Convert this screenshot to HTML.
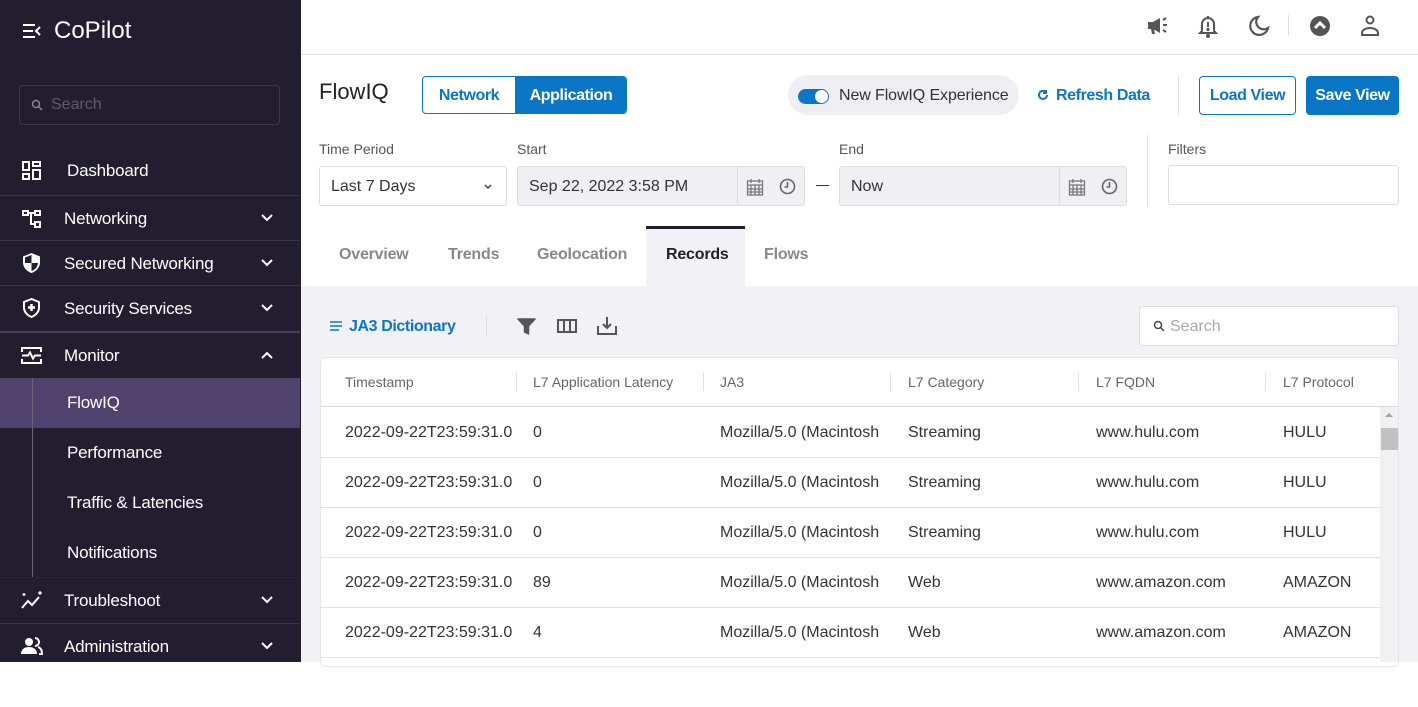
<!DOCTYPE html><html><head><meta charset="utf-8"><style>
*{box-sizing:border-box;margin:0;padding:0}
body{width:1418px;height:662px;overflow:hidden;font-family:"Liberation Sans",sans-serif;position:relative;background:#fff}
.a{position:absolute}
#sb{left:0;top:0;width:301px;height:662px;background:#221e2f;color:#fff}
.it{position:absolute;left:0;width:300px;font-size:17px;height:45px;line-height:45px;letter-spacing:-0.2px}
.it .t{position:absolute;left:64px}
.sep{position:absolute;left:0;width:300px;height:1px;background:#3a3448}
.chev{position:absolute;left:260px;top:15px}
.sub{position:absolute;left:0;width:300px;height:50px;line-height:50px;font-size:17px;letter-spacing:-0.2px}
.sub span{position:absolute;left:67px}
.lbl{font-size:14px;color:#555;top:141px}
.inp{border:1px solid #ddd;border-radius:3px;height:40px;top:166px;font-size:16px;line-height:38px;color:#333;padding-left:11px}
.tab{top:245px;font-size:16px;color:#888;font-weight:bold;letter-spacing:-0.2px}
.th{top:374px;font-size:14px;color:#666}
.vd{position:absolute;top:373px;width:1px;height:18px;background:#e2e2e2}
.row{position:absolute;left:320px;width:1060px;height:50px;border-top:1px solid #e3e3e3;font-size:16px;color:#333;line-height:50px}
.row span{position:absolute}
.bb{letter-spacing:-0.4px;font-size:16px;font-weight:bold}
</style></head><body>
<div id="sb" class="a">
<svg class="a" style="left:22px;top:23px" width="20" height="16" viewBox="0 0 20 16"><path d="M1 2h12M1 8h10M1 14h12M18 4l-4 4 4 4" stroke="#fff" stroke-width="2" fill="none"/></svg>
<div class="a" style="left:54px;top:17px;font-size:24px">CoPilot</div>
<div class="a" style="left:19px;top:85px;width:261px;height:40px;border:1px solid #3d374d;border-radius:4px"></div>
<svg class="a" style="left:31px;top:99px" width="12" height="12" viewBox="0 0 12 12"><circle cx="5" cy="5" r="3.5" stroke="#888" stroke-width="1.5" fill="none"/><path d="M7.5 7.5l3.5 3.5" stroke="#888" stroke-width="1.5"/></svg>
<div class="a" style="left:51px;top:96px;font-size:16px;color:#5f5a6e">Search</div>
<div class="it" style="top:148px"><svg class="a" style="left:22px;top:13px" width="19" height="19" viewBox="0 0 19 19" fill="none" stroke="#fff" stroke-width="2"><rect x="1" y="1" width="6" height="8"/><rect x="11" y="1" width="7" height="4"/><rect x="1" y="13" width="6" height="5"/><rect x="11" y="9" width="7" height="9"/></svg><span class="t" style="left:67px">Dashboard</span></div>
<div class="sep" style="top:195px"></div>
<div class="it" style="top:196px"><svg class="a" style="left:22px;top:14px" width="20" height="18" viewBox="0 0 20 18" fill="none" stroke="#fff" stroke-width="2"><rect x="1" y="1" width="5" height="4"/><rect x="13" y="1" width="5" height="4"/><rect x="13" y="12" width="5" height="5"/><path d="M6 3h7M9 3v11h4"/></svg><span class="t">Networking</span><svg class="chev" width="14" height="14"><path d="M2 4l5 5 5-5" stroke="#fff" stroke-width="2" fill="none"/></svg></div>
<div class="sep" style="top:240px"></div>
<div class="it" style="top:241px"><svg class="a" style="left:22px;top:11px" width="19" height="22" viewBox="0 0 19 22"><path d="M9.5 1L1 4.5v6c0 5 4 9 8.5 10.5 4.5-1.5 8.5-5.5 8.5-10.5v-6z" fill="#fff"/><path d="M9.5 3v8H3v-5.5zM9.5 11H16c-.5 4-3 7-6.5 8z" fill="#221e2f"/></svg><span class="t">Secured Networking</span><svg class="chev" width="14" height="14"><path d="M2 4l5 5 5-5" stroke="#fff" stroke-width="2" fill="none"/></svg></div>
<div class="sep" style="top:285px"></div>
<div class="it" style="top:286px"><svg class="a" style="left:22px;top:11px" width="19" height="22" viewBox="0 0 19 22"><path d="M9.5 2L2 5v5.5c0 4.5 3.5 8 7.5 9.5 4-1.5 7.5-5 7.5-9.5V5z" fill="none" stroke="#fff" stroke-width="2"/><path d="M9.5 7v7M6 10.5h7" stroke="#fff" stroke-width="2.5"/></svg><span class="t">Security Services</span><svg class="chev" width="14" height="14"><path d="M2 4l5 5 5-5" stroke="#fff" stroke-width="2" fill="none"/></svg></div>
<div class="a" style="left:0;top:331px;width:300px;height:2px;background:#463e5c"></div>
<div class="it" style="top:333px"><svg class="a" style="left:21px;top:13px" width="21" height="19" viewBox="0 0 21 19" fill="none" stroke="#fff" stroke-width="2"><path d="M1 6V2h19v4M1 13v4h19v-4M1 9.5h6l2-3 3 6 2-3h6"/></svg><span class="t">Monitor</span><svg class="chev" width="14" height="14"><path d="M2 10l5-5 5 5" stroke="#fff" stroke-width="2" fill="none"/></svg></div>
<div class="a" style="left:0;top:378px;width:300px;height:50px;background:#4f436d"></div>
<div class="a" style="left:32px;top:378px;width:1px;height:200px;background:#6b6478"></div>
<div class="sub" style="top:378px"><span>FlowIQ</span></div>
<div class="sub" style="top:428px"><span>Performance</span></div>
<div class="sub" style="top:478px"><span>Traffic &amp; Latencies</span></div>
<div class="sub" style="top:528px"><span>Notifications</span></div>
<div class="sep" style="top:577px;background:#2a2538"></div>
<div class="it" style="top:578px"><svg class="a" style="left:20px;top:12px" width="24" height="20" viewBox="0 0 24 20" fill="none" stroke="#fff" stroke-width="2"><path d="M2 18l6-7 4 4 7-8"/><path d="M4 3v3M2.5 4.5h3M20 1v4M18 3h4" stroke-width="1.3"/></svg><span class="t">Troubleshoot</span><svg class="chev" width="14" height="14"><path d="M2 4l5 5 5-5" stroke="#fff" stroke-width="2" fill="none"/></svg></div>
<div class="sep" style="top:623px"></div>
<div class="it" style="top:624px"><svg class="a" style="left:21px;top:13px" width="22" height="18" viewBox="0 0 22 18" fill="#fff"><circle cx="8" cy="5" r="4"/><path d="M0 17c0-5 4-7 8-7s8 2 8 7z"/><path d="M14 1a4 4 0 010 8M17 10c3 1 4 3 4 7h-3" stroke="#fff" stroke-width="2" fill="none"/></svg><span class="t">Administration</span><svg class="chev" width="14" height="14"><path d="M2 4l5 5 5-5" stroke="#fff" stroke-width="2" fill="none"/></svg></div>
</div>

<div class="a" style="left:301px;top:54px;width:1117px;height:1px;background:#e2e2e2"></div>
<svg class="a" style="left:1146px;top:16px" width="24" height="20" viewBox="0 0 24 20" fill="#555"><path d="M2 6h5l7-4v15l-7-4H2z"/><path d="M5 13l1 5h3l-1-5z"/><path d="M17 9h4M17 4l3-2M17 14l3 2" stroke="#555" stroke-width="2"/></svg>
<svg class="a" style="left:1198px;top:14px" width="20" height="24" viewBox="0 0 20 24" fill="none" stroke="#555" stroke-width="2"><path d="M10 2v2M4 17V10a6 6 0 0112 0v7l2 2H2z"/><path d="M10 8v5" /><circle cx="10" cy="22" r="1" fill="#555"/><circle cx="10" cy="15.5" r=".6" fill="#555"/></svg>
<svg class="a" style="left:1248px;top:15px" width="22" height="22" viewBox="0 0 22 22"><path d="M10 2a9 9 0 1010 11A7.5 7.5 0 0110 2z" fill="none" stroke="#555" stroke-width="2.2"/></svg>
<div class="a" style="left:1288px;top:15px;width:1px;height:20px;background:#ddd"></div>
<svg class="a" style="left:1310px;top:16px" width="20" height="20" viewBox="0 0 20 20"><circle cx="10" cy="10" r="10" fill="#555"/><path d="M5 12l5-5 5 5" stroke="#fff" stroke-width="3" fill="none"/></svg>
<svg class="a" style="left:1360px;top:15px" width="20" height="22" viewBox="0 0 20 22" fill="none" stroke="#555" stroke-width="2"><circle cx="10" cy="5" r="3.5"/><path d="M2 20v-2c0-3 4-5 8-5s8 2 8 5v2z"/></svg>

<div class="a" style="left:319px;top:79px;font-size:22px;color:#222">FlowIQ</div>
<div class="a" style="left:422px;top:76px;width:205px;height:38px;border:1px solid #0b76c5;border-radius:4px;overflow:hidden">
<div class="a bb" style="left:0;top:0;width:92px;height:36px;line-height:37px;text-align:center;color:#0b76c5">Network</div>
<div class="a bb" style="left:92px;top:0;width:112px;height:36px;line-height:37px;text-align:center;background:#0b76c5;color:#fff">Application</div></div>
<div class="a" style="left:788px;top:75px;width:231px;height:40px;border-radius:20px;background:#efeef3"></div>
<div class="a" style="left:798px;top:89px;width:31px;height:15px;border-radius:8px;background:#0b76c5"></div>
<div class="a" style="left:815px;top:90px;width:13px;height:13px;border-radius:50%;background:#fff"></div>
<div class="a" style="left:839px;top:87px;font-size:16px;color:#333;letter-spacing:-0.1px">New FlowIQ Experience</div>
<svg class="a" style="left:1037px;top:89px" width="12" height="12" viewBox="0 0 12 12" fill="none" stroke="#0b76c5" stroke-width="2"><path d="M10 6a4 4 0 11-1.5-3.2"/><path d="M9 1v3H6" /></svg>
<div class="a bb" style="left:1056px;top:87px;color:#0b76c5">Refresh Data</div>
<div class="a" style="left:1178px;top:75px;width:1px;height:40px;background:#e2e2e2"></div>
<div class="a bb" style="left:1199px;top:76px;width:97px;height:39px;border:1px solid #0b76c5;border-radius:4px;line-height:37px;text-align:center;color:#0b76c5">Load View</div>
<div class="a bb" style="left:1306px;top:76px;width:93px;height:39px;background:#0b76c5;border-radius:4px;line-height:39px;text-align:center;color:#fff">Save View</div>

<div class="a lbl" style="left:319px">Time Period</div>
<div class="a lbl" style="left:517px">Start</div>
<div class="a lbl" style="left:839px">End</div>
<div class="a lbl" style="left:1168px">Filters</div>
<div class="a inp" style="left:319px;width:188px;line-height:40px">Last 7 Days<svg class="a" style="left:163px;top:16px" width="10" height="8"><path d="M2 2l3 3 3-3" stroke="#444" stroke-width="1.5" fill="none"/></svg></div>
<div class="a inp" style="left:517px;width:288px;background:#f0f0f4;line-height:40px">Sep 22, 2022 3:58 PM<div class="a" style="left:219px;top:0;width:1px;height:38px;background:#ddd"></div>
<svg class="a" style="left:228px;top:11px" width="18" height="18" viewBox="0 0 18 18" fill="none" stroke="#777" stroke-width="1.3"><rect x="1.5" y="3" width="15" height="14"/><path d="M1.5 7h15M1.5 11h15M1.5 14h15M5 7v10M9 7v10M13 7v10M5 1v4M13 1v4"/></svg>
<svg class="a" style="left:261px;top:11px" width="17" height="17" viewBox="0 0 17 17" fill="none" stroke="#666" stroke-width="1.6"><circle cx="8.5" cy="8.5" r="7"/><path d="M8.5 4v5H5.5"/></svg></div>
<div class="a" style="left:816px;top:185px;width:13px;height:1px;background:#333"></div>
<div class="a inp" style="left:839px;width:288px;background:#f0f0f4;line-height:40px">Now<div class="a" style="left:219px;top:0;width:1px;height:38px;background:#ddd"></div>
<svg class="a" style="left:228px;top:11px" width="18" height="18" viewBox="0 0 18 18" fill="none" stroke="#777" stroke-width="1.3"><rect x="1.5" y="3" width="15" height="14"/><path d="M1.5 7h15M1.5 11h15M1.5 14h15M5 7v10M9 7v10M13 7v10M5 1v4M13 1v4"/></svg>
<svg class="a" style="left:261px;top:11px" width="17" height="17" viewBox="0 0 17 17" fill="none" stroke="#666" stroke-width="1.6"><circle cx="8.5" cy="8.5" r="7"/><path d="M8.5 4v5H5.5"/></svg></div>
<div class="a" style="left:1147px;top:135px;width:1px;height:71px;background:#e2e2e2"></div>
<div class="a inp" style="left:1168px;top:165px;width:231px"></div>

<div class="a" style="left:646px;top:226px;width:99px;height:60px;background:#f2f2f6;border-top:3px solid #221e2f"></div>
<div class="a tab" style="left:339px;top:246px">Overview</div>
<div class="a tab" style="left:448px;top:246px">Trends</div>
<div class="a tab" style="left:537px;top:246px">Geolocation</div>
<div class="a tab" style="left:666px;top:246px;color:#222">Records</div>
<div class="a tab" style="left:764px;top:246px">Flows</div>

<div class="a" style="left:301px;top:286px;width:1117px;height:376px;background:#f2f2f6"></div>
<svg class="a" style="left:330px;top:321px" width="12" height="10"><path d="M0 1h12M0 5h12M0 9h9" stroke="#0b76c5" stroke-width="1.5"/></svg>
<div class="a bb" style="left:349px;top:318px;color:#0b76c5">JA3 Dictionary</div>
<div class="a" style="left:486px;top:316px;width:1px;height:20px;background:#ddd"></div>
<svg class="a" style="left:517px;top:318px" width="19" height="17" viewBox="0 0 19 17"><path d="M1 1h17l-6.5 7v8l-4-2V8z" fill="#555" stroke="#555" stroke-width="1.5" stroke-linejoin="round"/></svg>
<svg class="a" style="left:557px;top:319px" width="20" height="14" viewBox="0 0 20 14" fill="none" stroke="#555" stroke-width="2"><rect x="1" y="1" width="18" height="12"/><path d="M7 1v12M13 1v12"/></svg>
<svg class="a" style="left:597px;top:316px" width="20" height="19" viewBox="0 0 20 19" fill="none" stroke="#555" stroke-width="2"><path d="M1 10v8h18v-8M10 1v11M6 8l4 4 4-4"/></svg>
<div class="a" style="left:1139px;top:306px;width:260px;height:40px;background:#fff;border:1px solid #ddd;border-radius:4px"></div>
<svg class="a" style="left:1153px;top:320px" width="12" height="12" viewBox="0 0 12 12"><circle cx="5" cy="5" r="3.5" stroke="#444" stroke-width="1.5" fill="none"/><path d="M7.5 7.5l3.5 3.5" stroke="#444" stroke-width="1.5"/></svg>
<div class="a" style="left:1170px;top:318px;font-size:16px;color:#aaa">Search</div>

<div class="a" style="left:320px;top:357px;width:1079px;height:310px;background:#fff;border:1px solid #e5e5ea;border-radius:5px"></div>
<div class="a th" style="left:345px">Timestamp</div>
<div class="vd" style="left:516px"></div><div class="a th" style="left:533px">L7 Application Latency</div>
<div class="vd" style="left:703px"></div><div class="a th" style="left:720px">JA3</div>
<div class="vd" style="left:890px"></div><div class="a th" style="left:908px">L7 Category</div>
<div class="vd" style="left:1078px"></div><div class="a th" style="left:1096px">L7 FQDN</div>
<div class="vd" style="left:1265px"></div><div class="a th" style="left:1283px">L7 Protocol</div>
<div class="a" style="left:321px;top:406px;width:1077px;height:1px;background:#d8d8dc"></div>
<div class="a" style="left:1380px;top:407px;width:18px;height:255px;background:#f1f1f1"></div>
<svg class="a" style="left:1383px;top:411px" width="12" height="8"><path d="M2 6l4-4 4 4z" fill="#a3a3a3"/></svg>
<div class="a" style="left:1381px;top:428px;width:17px;height:22px;background:#c1c1c1"></div>

<div class="row" style="top:407px;border-top:none;line-height:52px"><span style="left:25px">2022-09-22T23:59:31.0</span><span style="left:213px">0</span><span style="left:400px">Mozilla/5.0 (Macintosh</span><span style="left:588px">Streaming</span><span style="left:776px">www.hulu.com</span><span style="left:963px">HULU</span></div>
<div class="row" style="top:457px"><span style="left:25px">2022-09-22T23:59:31.0</span><span style="left:213px">0</span><span style="left:400px">Mozilla/5.0 (Macintosh</span><span style="left:588px">Streaming</span><span style="left:776px">www.hulu.com</span><span style="left:963px">HULU</span></div>
<div class="row" style="top:507px"><span style="left:25px">2022-09-22T23:59:31.0</span><span style="left:213px">0</span><span style="left:400px">Mozilla/5.0 (Macintosh</span><span style="left:588px">Streaming</span><span style="left:776px">www.hulu.com</span><span style="left:963px">HULU</span></div>
<div class="row" style="top:557px"><span style="left:25px">2022-09-22T23:59:31.0</span><span style="left:213px">89</span><span style="left:400px">Mozilla/5.0 (Macintosh</span><span style="left:588px">Web</span><span style="left:776px">www.amazon.com</span><span style="left:963px">AMAZON</span></div>
<div class="row" style="top:607px"><span style="left:25px">2022-09-22T23:59:31.0</span><span style="left:213px">4</span><span style="left:400px">Mozilla/5.0 (Macintosh</span><span style="left:588px">Web</span><span style="left:776px">www.amazon.com</span><span style="left:963px">AMAZON</span></div>
<div class="row" style="top:657px"></div>
</body></html>
